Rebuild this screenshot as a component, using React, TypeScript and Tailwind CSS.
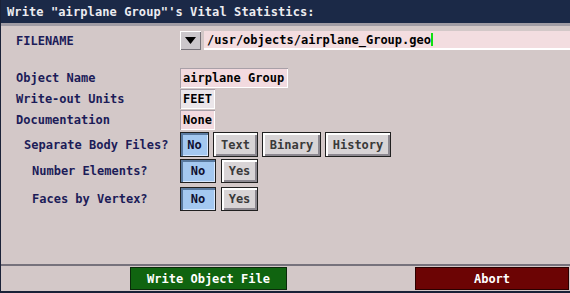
import React from "react";

const mono = { fontFamily: '"DejaVu Sans Mono", "Liberation Mono", monospace' };

function Toggle({ label, on, w }: { label: string; on?: boolean; w: string }) {
  return (
    <div
      className={`${w} h-full flex items-center justify-center border border-[#202020] text-[12px] font-bold ${
        on
          ? "bg-[#a4c8f0] text-[#101030] shadow-[inset_2px_2px_0_#5a7aa0,inset_-1px_-1px_0_#d8e8ff]"
          : "bg-[#d8d4d6] text-[#3a3a3a] shadow-[inset_2px_2px_0_#ffffff,inset_-2px_-2px_0_#8c8890]"
      }`}
    >
      {label}
    </div>
  );
}

function Field({ value, w, pink }: { value: string; w: string; pink?: boolean }) {
  return (
    <div
      className={`${w} h-[20px] flex items-center pl-[3px] text-[12px] font-bold text-black ${
        pink ? "bg-[#f2dadf]" : "bg-[#ebe6ea]"
      } shadow-[inset_1px_1px_0_#a8a0a8,inset_-1px_-1px_0_#ffffff]`}
    >
      {value}
    </div>
  );
}

export default function App() {
  return (
    <div
      className="w-[570px] h-[293px] flex flex-col bg-[#d3c8c8] border-l border-[#1a2238] overflow-hidden"
      style={mono}
    >
      {/* title */}
      <div className="h-[23px] bg-[#1b2947] flex items-center pl-[6px] text-[12px] font-bold text-[#ececf0] tracking-[0.1px]">
        Write "airplane Group"'s Vital Statistics:
      </div>
      <div className="h-[3px] bg-[#a09ca4]" />

      <div className="flex-1 flex flex-col pl-[15px] pt-[5px] text-[#1c1c58] text-[12px] font-bold">
        {/* filename */}
        <div className="flex items-center h-[19px]">
          <div className="w-[164px]">FILENAME</div>
          <div className="w-[21px] h-[19px] flex items-center justify-center bg-[#cbc7cb] shadow-[inset_1px_1px_0_#ffffff,inset_-1px_-1px_0_#77737a]">
            <svg width="11" height="7" viewBox="0 0 11 7">
              <polygon points="0,0 11,0 5.5,7" fill="#000" />
            </svg>
          </div>
          <div className="flex-1 ml-[3px] h-[19px] flex items-center pl-[3px] bg-[#f3dde0] border-b-2 border-white text-black">
            /usr/objects/airplane_Group.geo
            <span className="inline-block w-[2px] h-[13px] bg-[#10e010]" />
          </div>
        </div>

        <div className="flex flex-col gap-[1px] mt-[18px]">
          <div className="flex items-center">
            <div className="w-[164px]">Object Name</div>
            <Field value="airplane Group" w="w-[108px]" pink />
          </div>
          <div className="flex items-center">
            <div className="w-[164px]">Write-out Units</div>
            <Field value="FEET" w="w-[35px]" />
          </div>
          <div className="flex items-center">
            <div className="w-[164px]">Documentation</div>
            <Field value="None" w="w-[35px]" pink />
          </div>
        </div>

        <div className="flex items-center h-[25px] mt-[2px]">
          <div className="w-[164px] pl-[8px]">Separate Body Files?</div>
          <div className="flex gap-[4px] h-full">
            <Toggle label="No" on w="w-[29px]" />
            <Toggle label="Text" w="w-[45px]" />
            <Toggle label="Binary" w="w-[59px]" />
            <Toggle label="History" w="w-[66px]" />
          </div>
        </div>

        <div className="flex items-center h-[24px] mt-[2px]">
          <div className="w-[164px] pl-[16px]">Number Elements?</div>
          <div className="flex gap-[5px] h-full">
            <Toggle label="No" on w="w-[36px]" />
            <Toggle label="Yes" w="w-[37px]" />
          </div>
        </div>

        <div className="flex items-center h-[24px] mt-[4px]">
          <div className="w-[164px] pl-[16px]">Faces by Vertex?</div>
          <div className="flex gap-[5px] h-full">
            <Toggle label="No" on w="w-[36px]" />
            <Toggle label="Yes" w="w-[37px]" />
          </div>
        </div>
      </div>

      {/* bottom bar */}
      <div className="h-[27px] border-t-2 border-[#76727c] flex items-start pt-[1px] pb-[1px]">
        <div className="ml-[129px] w-[157px] h-[23px] flex items-center justify-center bg-[#106410] border border-[#0a2a0a] text-white text-[12px] font-bold">
          Write Object File
        </div>
        <div className="ml-[128px] w-[154px] h-[23px] flex items-center justify-center bg-[#6c0404] border border-[#2a0000] text-white text-[12px] font-bold">
          Abort
        </div>
      </div>
      <div className="h-[2px] bg-[#1a2238]" />
    </div>
  );
}
